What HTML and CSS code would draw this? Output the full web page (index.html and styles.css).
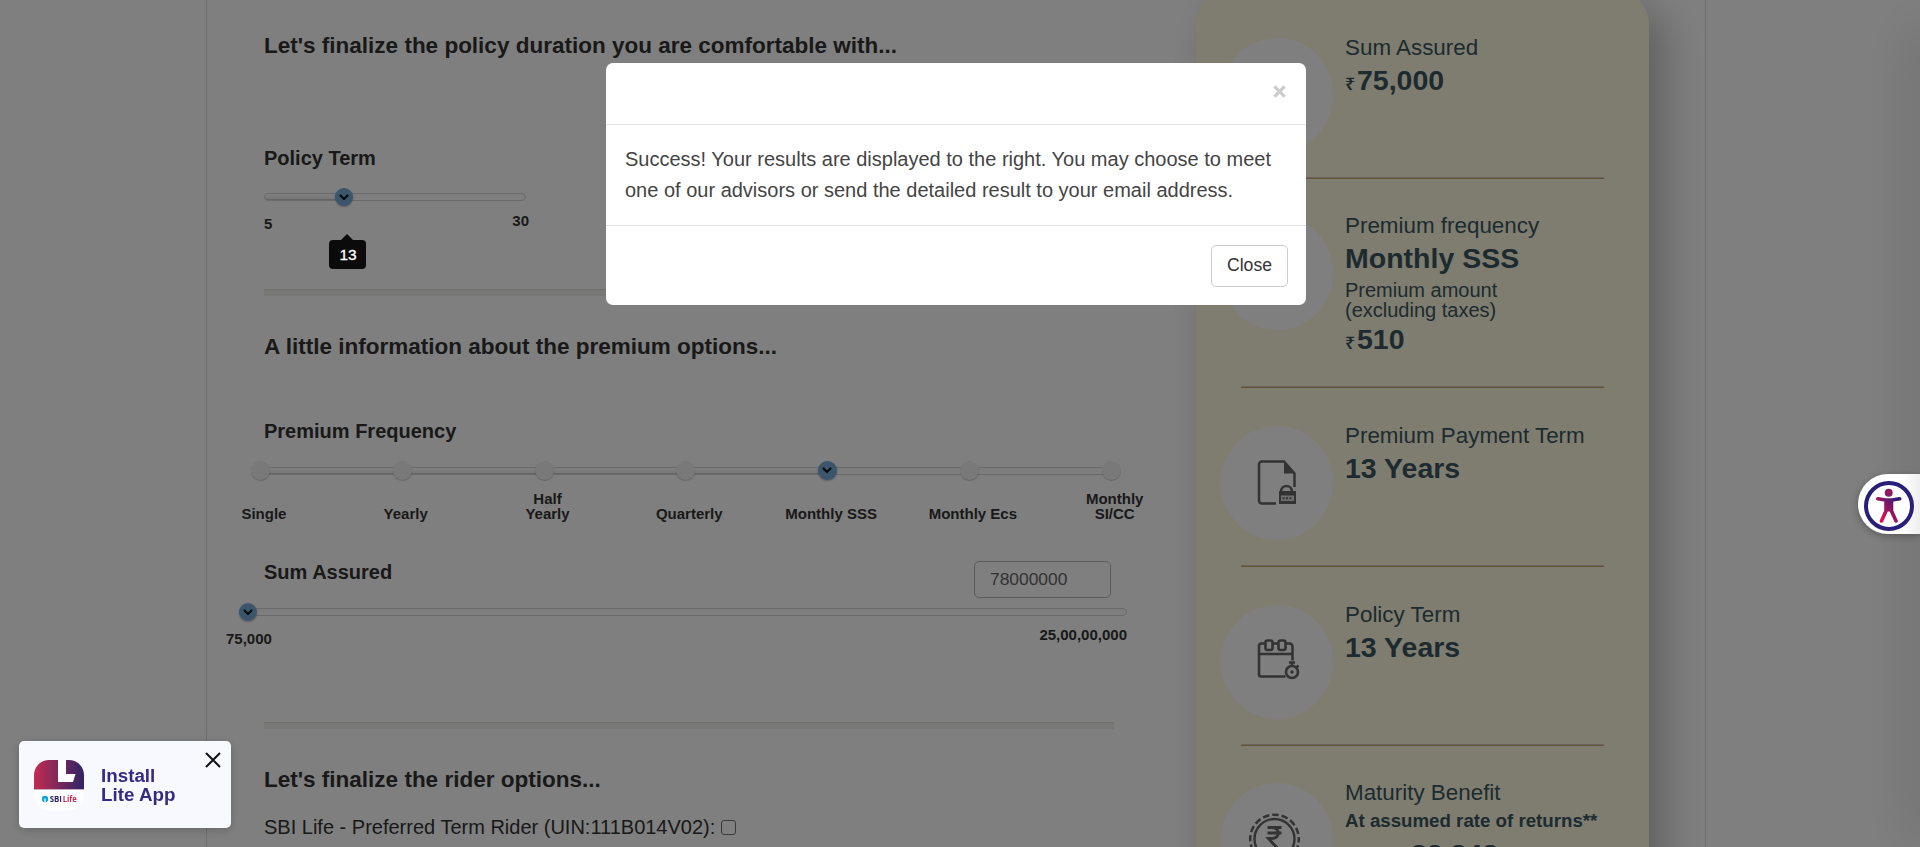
FILE: index.html
```html
<!DOCTYPE html>
<html lang="en">
<head>
<meta charset="utf-8">
<title>SBI Life - Premium Calculator</title>
<link rel="stylesheet" href="styles.css">
</head>
<body>
<div class="page">
  <main class="form">
    <h2 class="title title-duration"><span>Let's finalize the policy duration you are comfortable with...</span></h2>
    <h3 class="label label-term"><span>Policy Term</span></h3>
    <div class="slider slider-term">
      <div class="fill"></div>
      <div class="knob"><svg viewBox="0 0 18 18"><path d="M5.500 7.500 9 11l3.500-3.500"/></svg></div>
    </div>
    <div class="range range-term"><span class="low">5</span><span class="high">30</span></div>
    <div class="rule rule-first"></div>
    <h2 class="title title-premium"><span>A little information about the premium options...</span></h2>
    <h3 class="label label-frequency"><span>Premium Frequency</span></h3>
    <div class="slider slider-frequency">
      <div class="fill"></div>
      <div class="stops">
        <i class="stop"></i><i class="stop"></i><i class="stop"></i><i class="stop"></i>
        <i class="knob"><svg viewBox="0 0 18 18"><path d="M5.500 7.500 9 11l3.500-3.500"/></svg></i>
        <i class="stop"></i><i class="stop"></i>
      </div>
    </div>
    <div class="ticks">
      <span>Single</span><span>Yearly</span><span>Half<br>Yearly</span><span>Quarterly</span><span>Monthly SSS</span><span>Monthly Ecs</span><span>Monthly<br>SI/CC</span>
    </div>
    <div class="sum-row">
      <h3 class="label"><span>Sum Assured</span></h3>
      <div class="amount"><span>78000000</span></div>
    </div>
    <div class="slider slider-sum">
      <div class="knob"><svg viewBox="0 0 18 18"><path d="M5.500 7.500 9 11l3.500-3.500"/></svg></div>
    </div>
    <div class="range range-sum"><span class="low">75,000</span><span class="high">25,00,00,000</span></div>
    <div class="rule rule-second"></div>
    <h2 class="title title-rider"><span>Let's finalize the rider options...</span></h2>
    <div class="rider"><span>SBI Life - Preferred Term Rider (UIN:111B014V02):</span><i class="check"></i></div>
  </main>

  <aside class="summary">
    <section class="item item-sum">
      <div class="disc"></div>
      <div class="info"><p class="name">Sum Assured</p><p class="value"><span class="rs">₹</span>75,000</p></div>
    </section>
    <section class="item item-frequency">
      <div class="disc"></div>
      <div class="info"><p class="name">Premium frequency</p><p class="value">Monthly SSS</p><p class="note">Premium amount<br>(excluding taxes)</p><p class="value value-amount"><span class="rs">₹</span>510</p></div>
    </section>
    <section class="item">
      <div class="disc">
        <svg viewBox="1 1 112 114"><g fill="none" stroke="#666" stroke-width="2.500"><path d="M56 78.400H42a3 3 0 0 1-3-3V39.500a3 3 0 0 1 3-3h22l10.500 12V62"/><path d="M61 67c0-8 11-8 11 0"/></g><path d="M64 36.500v12h11zM59 66h17v13H59z" fill="#666"/><path d="M61 70.500h13v5.500H61z" fill="#ddd"/><path d="M62.500 73.200h10" stroke="#666" stroke-width="2" stroke-dasharray="2 1.500"/></svg>
      </div>
      <div class="info"><p class="name">Premium Payment Term</p><p class="value">13 Years</p></div>
    </section>
    <section class="item item-term">
      <div class="disc">
        <svg viewBox="0.500 0.500 112 114"><g fill="none" stroke="#666" stroke-width="2.600"><path d="M45 39h-4a2.500 2.500 0 0 0-2.500 2.500V70a2 2 0 0 0 2 2H65M52 39h6M65 39h4a3 3 0 0 1 3 3v14M38.500 49.500H72"/><rect x="45" y="36" width="7" height="9.500" rx="2"/><rect x="58" y="36" width="7" height="9.500" rx="2"/><circle cx="71.500" cy="67.500" r="6"/><path d="M68.500 58h6M71.500 58v4M76 63l2-2"/></g><circle cx="71.500" cy="67.500" r="1.700" fill="#666"/></svg>
      </div>
      <div class="info"><p class="name">Policy Term</p><p class="value">13 Years</p></div>
    </section>
    <section class="item">
      <div class="disc">
        <svg viewBox="0 0 112 114"><g fill="none" stroke="#666"><circle cx="53.500" cy="56" r="20" stroke-width="2.400"/><circle cx="53.500" cy="56" r="24.300" stroke-width="2.500" stroke-dasharray="6.500 3.040" stroke-dashoffset="3"/><path d="M46.500 44.500h14M46.500 50h14M47.500 44.500h3c9 0 9 11 0 11h-3l10 11" stroke-width="3"/></g></svg>
      </div>
      <div class="info"><p class="name">Maturity Benefit</p><p class="rate">At assumed rate of returns**</p><p class="value value-maturity">82,848</p></div>
    </section>
  </aside>
</div>

<div class="side-shadow"></div>
<div class="backdrop"></div>

<div class="tooltip">13</div>

<div class="modal" role="dialog">
  <div class="modal-head"><svg viewBox="0 0 12 12"><path d="M1.300 1.300l9.400 9.400M10.700 1.300l-9.400 9.400"/></svg></div>
  <div class="modal-body"><span>Success! Your results are displayed to the right. You may choose to meet</span><br><span>one of our advisors or send the detailed result to your email address.</span></div>
  <div class="modal-foot"><button class="close">Close</button></div>
</div>

<div class="install">
  <svg class="logo" viewBox="0 0 50 50">
    <defs><linearGradient id="brand"><stop offset="0" stop-color="#c42b50"/><stop offset="1" stop-color="#2f2566"/></linearGradient><clipPath id="tile"><rect width="50" height="50" rx="15"/></clipPath></defs>
    <g clip-path="url(#tile)"><path fill="#fff" d="M0 0h50v50H0z"/><path fill="url(#brand)" d="M0 0h50v29H0z"/><path fill="#c9a9bd" d="M0 29h50v1H0z"/><path fill="#fff" d="M24 0h8v14h9.500l-2.500 8H24z"/></g>
    <circle cx="11" cy="39" r="3.200" fill="#12a4dd"/><path d="M11 38.500v3.700" stroke="#fff" stroke-width="1.200"/>
    <text class="logo-sbi" x="15.700" y="42" textLength="12.300" lengthAdjust="spacingAndGlyphs">SBI</text><text class="logo-life" x="28.700" y="42" textLength="14" lengthAdjust="spacingAndGlyphs">Life</text>
  </svg>
  <div class="install-text">Install<br>Lite App</div>
  <svg class="dismiss" viewBox="0 0 16 16"><path d="M1 1l14 14M15 1L1 15"/></svg>
</div>

<div class="access">
  <svg viewBox="0 0 50 50">
    <defs><linearGradient id="figure" gradientUnits="userSpaceOnUse" x1="16" y1="34" x2="35" y2="19"><stop offset="0" stop-color="#d8104f"/><stop offset="1" stop-color="#2b1d7a"/></linearGradient></defs>
    <circle cx="25" cy="25" r="23" fill="#fff" stroke="#2a1f78" stroke-width="4"/>
    <circle cx="24.700" cy="11.800" r="4" fill="#8b1b62"/>
    <g fill="none" stroke="url(#figure)" stroke-width="3.600" stroke-linecap="round" stroke-linejoin="round"><path d="M13.800 17.800l7.700 1.200h6.500l7.700-1.200M22 20l0 10-4.500 10M27.500 20v10l4.500 10"/></g>
    <path d="M21 18.500h8v12h-8z" fill="url(#figure)"/>
  </svg>
</div>
</body>
</html>
```
FILE: styles.css
```css
* { box-sizing: border-box; }
body { margin: 0; width: 1920px; height: 847px; overflow: hidden; background: #fff; color: #333; font-family: "Liberation Sans", Arial, sans-serif; }
h2, h3, p { margin: 0; }
i { font-style: normal; display: block; }

.page { width: 1500px; height: 847px; margin-left: 206px; border: solid #d9d9d9; border-width: 0 1px; display: flex; align-items: flex-start; overflow: hidden; }
.form { width: 989px; flex: none; padding-left: 57px; }
.title { font-size: 22.500px; line-height: 28px; height: 28px; white-space: nowrap; }
.title-duration { margin-top: 32px; }
.label { font-size: 20px; line-height: 24px; height: 24px; white-space: nowrap; }
.label-term { margin-top: 86px; }

.slider { position: relative; height: 8px; border: 1px solid #d4d4d4; border-radius: 4px; background: linear-gradient(#fafafa, #fff); }
.fill { height: 6px; border-radius: 3px; background: linear-gradient(#fff, #eee); box-shadow: inset 0 -1px #c8c8c8; }
.knob { width: 18px; height: 18px; border-radius: 50%; background: #77acd9; box-shadow: 0 1px 2px rgba(0,0,0,.3); }
.knob svg { display: block; width: 18px; height: 18px; fill: none; stroke: #101820; stroke-width: 2.200; stroke-linecap: round; stroke-linejoin: round; }
.slider > .knob { position: absolute; top: -6px; }
.slider-term { width: 262px; margin-top: 23px; }
.slider-term .fill { width: 80px; }
.slider-term > .knob { left: 70px; }
.range { display: flex; justify-content: space-between; font-weight: bold; font-size: 15px; line-height: 18px; }
.range-term { width: 265px; margin-top: 11px; height: 18px; }
.range-term .low { padding-top: 3px; }
.rule { width: 850px; height: 7px; background: #f0f0ec; border-top: 1px solid #dcdcd8; }
.rule-first { margin-top: 59px; }
.title-premium { margin-top: 37px; }
.label-frequency { margin-top: 58px; }

.slider-frequency { width: 851px; margin: 24px 0 0 -4px; }
.slider-frequency .fill { width: 566px; }
.stops { position: absolute; top: -7px; left: -10px; width: 870px; display: flex; justify-content: space-between; }
.stop { width: 19px; height: 19px; border-radius: 50%; background: #f2f2f2; box-shadow: 0 1px 1px rgba(0,0,0,.22); }
.stops .knob { width: 19px; height: 19px; }
.ticks { display: grid; grid-template-columns: repeat(7, 141.800px); align-items: end; margin: 15px 0 0 -71px; width: 993px; height: 31px; text-align: center; font-weight: bold; font-size: 15px; line-height: 15px; }
.sum-row { width: 847px; margin-top: 39px; height: 38px; display: flex; justify-content: space-between; }
.amount { width: 137px; height: 37px; margin-top: 1px; border: 1px solid #b9b9b9; border-radius: 5px; padding-left: 15px; font-size: 17.400px; line-height: 34px; color: #666; }
.slider-sum { width: 880px; margin: 10px 0 0 -17px; }
.slider-sum > .knob { left: -9px; }
.range-sum { width: 901px; margin: 10px 0 0 -38px; height: 18px; }
.range-sum .low { padding-top: 4px; }
.rule-second { margin-top: 78px; }
.title-rider { margin-top: 37px; }
.rider { display: flex; align-items: center; gap: 6px; margin-top: 21px; font-size: 20px; line-height: 24px; white-space: nowrap; }
.check { width: 15px; height: 15px; border: 1.500px solid #767676; border-radius: 3px; }

.summary { width: 453px; height: 900px; margin-top: -7px; flex: none; border-radius: 30px; background: #fefae0; box-shadow: 15px 15px 40px rgba(0,0,0,.26); padding: 45px 0 0 25px; color: #3a5761; }
.item { position: relative; height: 179px; display: flex; gap: 12px; }
.item-sum, .item-term { height: 178px; }
.item-frequency { height: 210px; }
.item:not(:last-child)::after { content: ""; position: absolute; left: 20px; width: 363px; top: 139px; height: 2px; background: linear-gradient(#dccbc0 50%, #c9a96a 50%); }
.item-frequency::after { top: 170px !important; }
.disc { width: 112px; height: 114px; border-radius: 50%; background: #fff; flex: none; }
.disc svg { display: block; width: 112px; height: 114px; }
.info { white-space: nowrap; }
.name { font-size: 22.400px; line-height: 26px; margin-top: -3px; }
.value { font-size: 28.500px; line-height: 34px; font-weight: bold; margin-top: 2px; }
.value-amount { margin-top: 2px; }
.rs { display: inline-block; width: 12px; font-family: "Noto Sans", "DejaVu Sans", sans-serif; font-size: 18px; line-height: 20px; font-weight: 600; }
.note { font-size: 20px; line-height: 20px; margin-top: 5px; }
.rate { font-size: 18.700px; line-height: 22px; font-weight: bold; margin-top: 4px; }
.value-maturity { padding-left: 66px; margin-top: 5px; }

.side-shadow { position: fixed; top: 30px; right: -10px; width: 10px; height: 810px; box-shadow: 0 0 50px 5px rgba(0,0,0,.2); }
.backdrop { position: fixed; inset: 0; background: rgba(0,0,0,.5); }
.tooltip { position: absolute; left: 329px; top: 240px; width: 37px; height: 29px; border-radius: 4px; background: #0b0b0b; color: #fff; font-size: 15.500px; line-height: 29px; text-align: center; padding-left: 1px; -webkit-text-stroke: .3px #fff; }
.tooltip::before { content: ""; position: absolute; left: 12px; top: -6px; border: solid transparent; border-width: 0 6px 6px; border-bottom-color: #0b0b0b; }

.modal { position: fixed; left: 606px; top: 63px; width: 700px; height: 242px; border-radius: 7px; background: #fff; }
.modal-head { height: 62px; border-bottom: 1px solid #e2e2e2; display: flex; justify-content: flex-end; padding: 22px 20px 0; }
.modal-head svg { width: 13px; height: 13px; fill: none; stroke: #ccc; stroke-width: 3; }
.modal-body { height: 100px; padding: 19px; font-size: 20px; line-height: 31px; white-space: nowrap; color: #444; }
.modal-foot { height: 80px; border-top: 1px solid #e2e2e2; padding: 19px 18px; display: flex; justify-content: flex-end; }
.close { width: 77px; height: 42px; padding: 0 0 2px; border: 1px solid #ccc; border-radius: 5px; background: #fff; color: #333; font: 17.600px "Liberation Sans", sans-serif; }

.install { position: fixed; left: 19px; top: 741px; width: 212px; height: 87px; border-radius: 5px; background: #f7f9ff; box-shadow: 0 2px 10px rgba(0,0,0,.2); display: flex; padding: 19px 10px 0 15px; }
.logo { width: 50px; height: 50px; flex: none; }
.logo-sbi, .logo-life { font: bold 8.500px "Open Sans", sans-serif; fill: #2f2566; }
.logo-life { fill: #c42b50; }
.install-text { padding: 6px 0 0 17px; color: #352a83; font-size: 18.800px; font-weight: bold; line-height: 19px; white-space: nowrap; }
.dismiss { width: 16px; height: 16px; margin: -8px 0 0 auto; fill: none; stroke: #111; stroke-width: 2; }

.access { position: fixed; left: 1858px; top: 474px; width: 62px; height: 60px; border-radius: 30px 0 0 30px; background: linear-gradient(90deg, #fff 70%, #eee); box-shadow: 0 2px 8px rgba(0,0,0,.3); padding: 7px 0 0 6px; }
.access svg { display: block; width: 50px; height: 50px; }
```
